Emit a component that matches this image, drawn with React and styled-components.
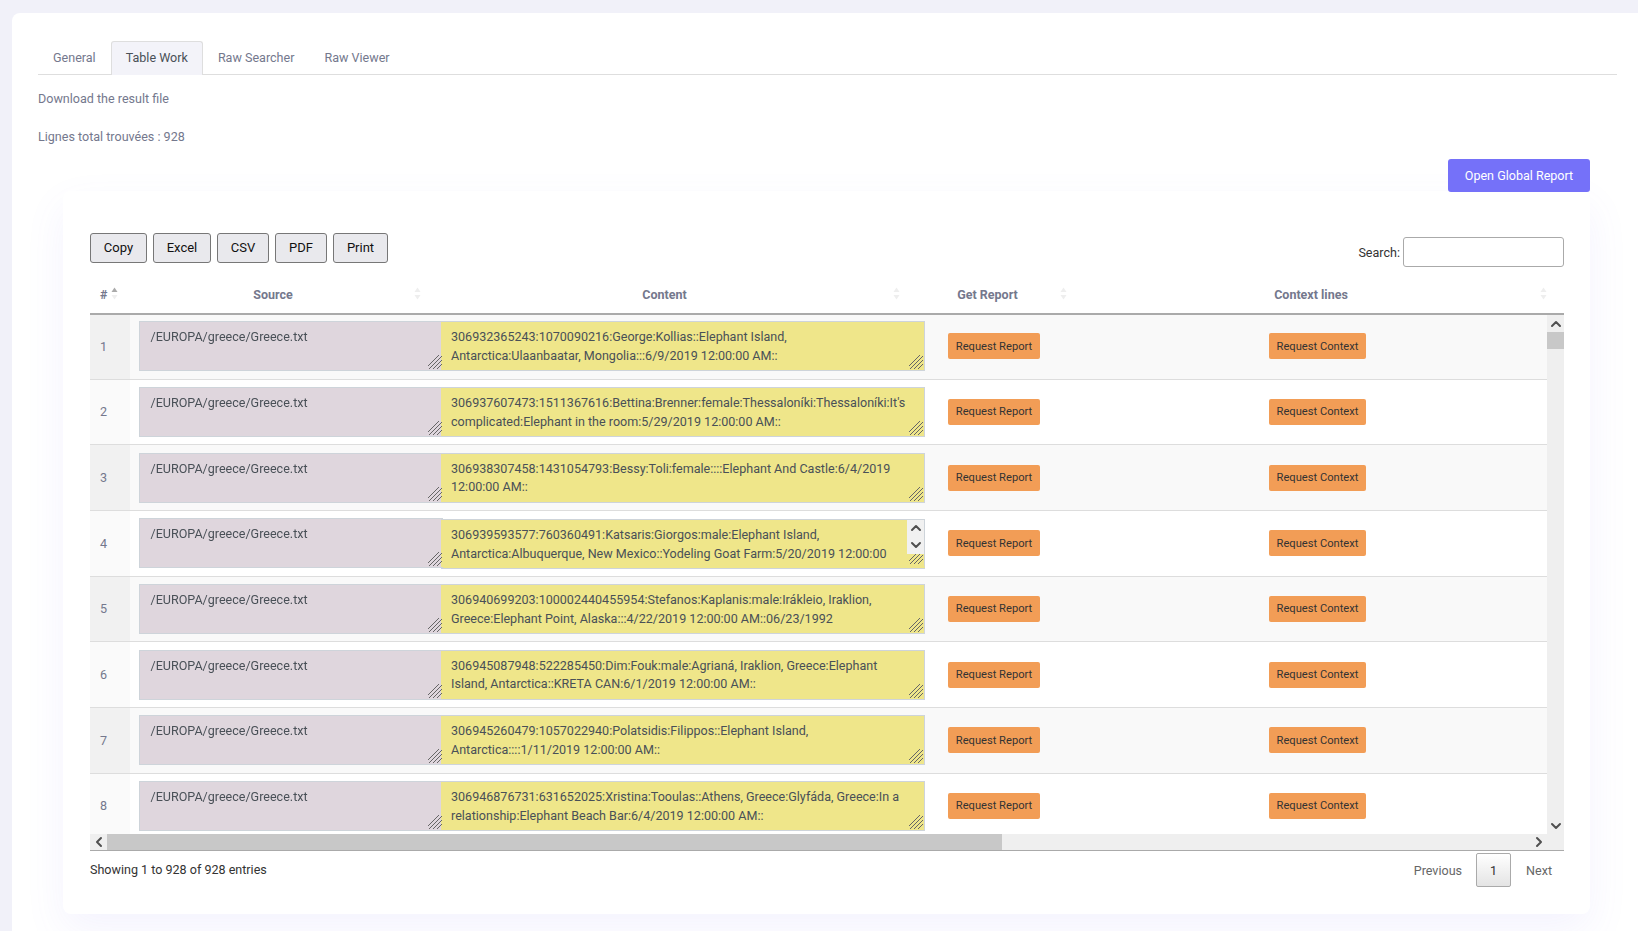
import React from "react";
import styled, { createGlobalStyle } from "styled-components";
import { ChevronUp, ChevronDown, ChevronLeft, ChevronRight } from "lucide-react";

const GlobalStyle = createGlobalStyle`
  html, body {
    margin: 0;
    height: 100%;
    overflow: hidden;
    background: #f1f1f9;
    font-family: Roboto, "Liberation Sans", sans-serif;
    font-size: 12.55px;
    color: #74788d;
  }
`;

const hatch = `url("data:image/svg+xml,${encodeURIComponent(
  `<svg xmlns='http://www.w3.org/2000/svg' width='17' height='17' viewBox='0 0 17 17'><path d='M3 16 16 3M7 16 16 7M11 16 16 11M0 15 15 0' stroke='#666' stroke-width='1' fill='none'/></svg>`
)}")`;

const Page = styled.div`
  box-sizing: border-box;
  height: 931px;
  padding: 13px 0 0 12px;
  overflow: hidden;
`;

const Card = styled.main`
  box-sizing: border-box;
  height: 100%;
  background: #fff;
  border-radius: 8px 0 0 0;
  padding: 28px 21px 0 26px;
`;

const Tabs = styled.nav`
  display: flex;
  height: 33px;
  border-bottom: 1px solid #dedede;
`;

const Tab = styled.a`
  box-sizing: border-box;
  height: 34px;
  padding: 0 14px 3px;
  display: flex;
  align-items: center;
  color: ${(p) => (p.$active ? "#495057" : "#74788d")};
  background: ${(p) => (p.$active ? "#f3f3f9" : "transparent")};
  border: 1px solid ${(p) => (p.$active ? "#dedede" : "transparent")};
  border-bottom: none;
  border-radius: 3px 3px 0 0;
`;

const Note = styled.p`
  margin: 0;
  line-height: 20px;
  &:first-of-type {
    margin-top: 14px;
  }
  & + & {
    margin-top: 18px;
  }
`;

const ReportBar = styled.div`
  display: flex;
  justify-content: flex-end;
  margin: 12px 27px 0 0;
  position: relative;
  z-index: 1;
`;

const PrimaryButton = styled.button`
  width: 142px;
  height: 33px;
  border: none;
  border-radius: 3px;
  background: #7571f9;
  color: #fff;
  font: 12.55px Roboto, sans-serif;
`;

const TableCard = styled.section`
  box-sizing: border-box;
  height: 723px;
  margin: -1px 27px 0 25px;
  padding: 42px 26px 0 27px;
  background: #fff;
  border-radius: 8px;
  box-shadow: 0 16px 40px rgba(110, 105, 240, 0.08);
`;

const Toolbar = styled.div`
  display: flex;
  justify-content: space-between;
  align-items: flex-start;
  height: 47px;
`;

const ExportGroup = styled.div`
  display: flex;
  gap: 6px;
`;

const ExportButton = styled.button`
  box-sizing: border-box;
  height: 30px;
  width: ${(p) => p.$width}px;
  padding: 0 0 2px;
  border: 1px solid #777;
  border-radius: 3px;
  background: #e9e9ed;
  color: #111;
  font: 13px Roboto, sans-serif;
`;

const SearchLabel = styled.label`
  display: flex;
  align-items: center;
  gap: 3px;
  margin-top: 4px;
  color: #333;
`;

const SearchInput = styled.input`
  box-sizing: border-box;
  width: 161px;
  height: 30px;
  border: 1px solid #aaa;
  border-radius: 3px;
  background: #fff;
`;

const HeadRow = styled.div`
  display: grid;
  grid-template-columns: 31px 304px 479px 167px 480px 13px;
  height: 33px;
  border-bottom: 2px solid #aaa;
`;

const HeadCell = styled.div`
  position: relative;
  display: flex;
  align-items: center;
  justify-content: ${(p) => (p.$left ? "flex-start" : "center")};
  padding-left: ${(p) => (p.$left ? "10px" : "0")};
  padding-bottom: 4px;
  font-weight: 700;
  font-size: 12.5px;
  color: #74788d;
`;

const SortMark = styled.svg`
  position: absolute;
  right: ${(p) => (p.$tight ? "3px" : "4px")};
  top: 7px;
  width: 7px;
  height: 13px;
`;

const ScrollFrame = styled.div`
  display: grid;
  grid-template-columns: 1fr 17px;
  grid-template-rows: 519px 16px;
  border-bottom: 1px solid #aaa;
`;

const Viewport = styled.div`
  overflow: hidden;
`;

const VBar = styled.div`
  display: flex;
  flex-direction: column;
  background: #efefef;
`;

const HBar = styled.div`
  grid-column: 1 / 3;
  display: flex;
  background: #efefef;
  padding-right: 17px;
`;

const BarButton = styled.span`
  flex: none;
  display: flex;
  align-items: center;
  justify-content: center;
  width: 17px;
  height: ${(p) => (p.$short ? "16px" : "17px")};
  color: #505050;
`;

const BarFill = styled.span`
  flex: 1;
`;

const VThumb = styled.span`
  flex: none;
  height: 17px;
  background: #c8c8c8;
`;

const HThumb = styled.span`
  flex: none;
  width: 895px;
  background: #c8c8c8;
`;

const RowsTable = styled.table`
  table-layout: fixed;
  width: 1457px;
  margin-top: -1.5px;
  border-collapse: collapse;
`;

const Row = styled.tr`
  height: 65.67px;
  background: ${(p) => (p.$odd ? "#f9f9f9" : "#fff")};
  border-bottom: 1px solid #ddd;
`;

const IndexCell = styled.td`
  width: 40px;
  box-sizing: border-box;
  padding: 0 0 0 10px;
  background: ${(p) => (p.$odd ? "#f1f1f1" : "#fafafa")};
  color: #74788d;
`;

const SourceCell = styled.td`
  width: 311px;
  box-sizing: border-box;
  padding: 0 0 0 9px;
`;

const ContentCell = styled.td`
  width: 497px;
  box-sizing: border-box;
  padding: 0;
`;

const ActionCell = styled.td`
  width: ${(p) => (p.$wide ? "321px" : "288px")};
  box-sizing: border-box;
  padding: 0 0 0 10px;
`;

const Field = styled.textarea`
  display: block;
  box-sizing: border-box;
  height: 50px;
  margin: 0;
  padding: 6px 10px;
  border: 1px solid #ced4da;
  border-radius: 0;
  outline: none;
  resize: both;
  color: #495057;
  font: 12.55px/18.8px Roboto, sans-serif;
  &::-webkit-resizer {
    background-image: ${hatch};
    background-repeat: no-repeat;
    background-position: right bottom;
  }
`;

const SourceField = styled(Field)`
  position: relative;
  z-index: 1;
  width: 304px;
  padding-left: 10.5px;
  background: linear-gradient(to right, #dfd6dd 301px, transparent 301px);
  border-right: none;
`;

const ContentWrap = styled.div`
  position: relative;
  width: 484px;
`;

const ContentField = styled(Field)`
  width: 484px;
  background: #efe68a;
  border-left: none;
  padding-right: ${(p) => (p.$scrolls ? "27px" : "10px")};
  ${(p) =>
    p.$scrolls &&
    `
    height: 49px;
    border-bottom: 3px solid #efe68a;
    box-shadow: 0 1px 0 #ced4da;
  `}
`;

const FieldScrollbar = styled.div`
  position: absolute;
  top: 1px;
  right: 1px;
  display: flex;
  flex-direction: column;
  background: #f1f1f1;
`;

const ActionButton = styled.button`
  height: 26px;
  width: ${(p) => p.$width}px;
  padding: 0;
  border: none;
  border-radius: 2px;
  background: #f29d56;
  color: #333;
  font: 11.15px Roboto, sans-serif;
`;

const Footer = styled.div`
  display: flex;
  justify-content: space-between;
  align-items: center;
  height: 36px;
  margin-top: 1px;
`;

const Showing = styled.div`
  color: #333;
  padding-bottom: 2px;
`;

const Pager = styled.div`
  display: flex;
  align-items: center;
  padding-right: 12px;
`;

const PagerLink = styled.a`
  color: #666;
`;

const PageNumber = styled.span`
  box-sizing: border-box;
  display: flex;
  align-items: center;
  justify-content: center;
  width: 35px;
  height: 34px;
  margin: 0 15px 0 14px;
  border: 1px solid #aaa;
  border-radius: 2px;
  background: linear-gradient(#fff, #e4e4e4);
  color: #333;
`;

const rows = [
  "306932365243:1070090216:George:Kollias::Elephant Island, Antarctica:Ulaanbaatar, Mongolia:::6/9/2019 12:00:00 AM::",
  "306937607473:1511367616:Bettina:Brenner:female:Thessaloníki:Thessaloníki:It's complicated:Elephant in the room:5/29/2019 12:00:00 AM::",
  "306938307458:1431054793:Bessy:Toli:female::::Elephant And Castle:6/4/2019 12:00:00 AM::",
  "306939593577:760360491:Katsaris:Giorgos:male:Elephant Island, Antarctica:Albuquerque, New Mexico::Yodeling Goat Farm:5/20/2019 12:00:00 AM::",
  "306940699203:100002440455954:Stefanos:Kaplanis:male:Irákleio, Iraklion, Greece:Elephant Point, Alaska:::4/22/2019 12:00:00 AM::06/23/1992",
  "306945087948:522285450:Dim:Fouk:male:Agrianá, Iraklion, Greece:Elephant Island, Antarctica::KRETA CAN:6/1/2019 12:00:00 AM::",
  "306945260479:1057022940:Polatsidis:Filippos::Elephant Island, Antarctica::::1/11/2019 12:00:00 AM::",
  "306946876731:631652025:Xristina:Tooulas::Athens, Greece:Glyfáda, Greece:In a relationship:Elephant Beach Bar:6/4/2019 12:00:00 AM::",
];

const exportsList = [
  ["Copy", 57],
  ["Excel", 58],
  ["CSV", 52],
  ["PDF", 52],
  ["Print", 55],
];

const columns = ["#", "Source", "Content", "Get Report", "Context lines"];

function Sort({ active, tight }) {
  return (
    <SortMark $tight={tight} viewBox="0 0 7 13">
      <path d="M3.5 0.5 6.5 5H0.5Z" fill={active ? "#aaa" : "#eee"} />
      <path d="M3.5 12.5 0.5 8H6.5Z" fill="#eee" />
    </SortMark>
  );
}

export default function App() {
  return (
    <Page>
      <GlobalStyle />
      <Card>
        <Tabs>
          <Tab>General</Tab>
          <Tab $active>Table Work</Tab>
          <Tab>Raw Searcher</Tab>
          <Tab>Raw Viewer</Tab>
        </Tabs>
        <Note>Download the result file</Note>
        <Note>Lignes total trouvées : 928</Note>
        <ReportBar>
          <PrimaryButton>Open Global Report</PrimaryButton>
        </ReportBar>
        <TableCard>
          <Toolbar>
            <ExportGroup>
              {exportsList.map(([label, width]) => (
                <ExportButton key={label} $width={width}>
                  {label}
                </ExportButton>
              ))}
            </ExportGroup>
            <SearchLabel>
              Search:
              <SearchInput />
            </SearchLabel>
          </Toolbar>
          <HeadRow>
            {columns.map((name, i) => (
              <HeadCell key={name} $left={i === 0}>
                {name}
                <Sort active={i === 0} tight={i === 0} />
              </HeadCell>
            ))}
          </HeadRow>
          <ScrollFrame>
            <Viewport>
              <RowsTable>
                <tbody>
                  {rows.map((text, i) => (
                    <Row key={text} $odd={i % 2 === 0}>
                      <IndexCell $odd={i % 2 === 0}>{i + 1}</IndexCell>
                      <SourceCell>
                        <SourceField readOnly value="/EUROPA/greece/Greece.txt" />
                      </SourceCell>
                      <ContentCell>
                        <ContentWrap>
                          <ContentField readOnly value={text} $scrolls={i === 3} />
                          {i === 3 && (
                            <FieldScrollbar>
                              <BarButton>
                                <ChevronUp size={16} strokeWidth={3} />
                              </BarButton>
                              <BarButton>
                                <ChevronDown size={16} strokeWidth={3} />
                              </BarButton>
                            </FieldScrollbar>
                          )}
                        </ContentWrap>
                      </ContentCell>
                      <ActionCell $wide>
                        <ActionButton $width={92}>Request Report</ActionButton>
                      </ActionCell>
                      <ActionCell>
                        <ActionButton $width={97}>Request Context</ActionButton>
                      </ActionCell>
                    </Row>
                  ))}
                </tbody>
              </RowsTable>
            </Viewport>
            <VBar>
              <BarButton>
                <ChevronUp size={16} strokeWidth={3} />
              </BarButton>
              <VThumb />
              <BarFill />
              <BarButton>
                <ChevronDown size={16} strokeWidth={3} />
              </BarButton>
            </VBar>
            <HBar>
              <BarButton $short>
                <ChevronLeft size={16} strokeWidth={3} />
              </BarButton>
              <HThumb />
              <BarFill />
              <BarButton $short>
                <ChevronRight size={16} strokeWidth={3} />
              </BarButton>
            </HBar>
          </ScrollFrame>
          <Footer>
            <Showing>Showing 1 to 928 of 928 entries</Showing>
            <Pager>
              <PagerLink>Previous</PagerLink>
              <PageNumber>1</PageNumber>
              <PagerLink>Next</PagerLink>
            </Pager>
          </Footer>
        </TableCard>
      </Card>
    </Page>
  );
}
